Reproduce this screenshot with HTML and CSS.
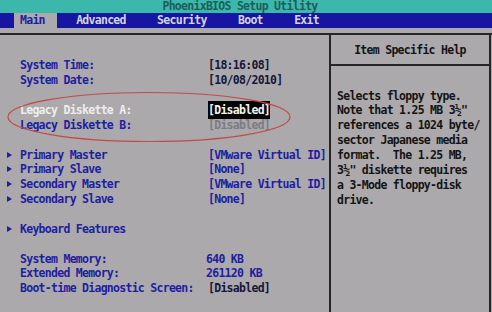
FILE: index.html
```html
<!DOCTYPE html>
<html>
<head>
<meta charset="utf-8">
<link rel="stylesheet" href="styles.css">
</head>
<body>
<div class="screen">
  <header class="title">PhoenixBIOS Setup Utility</header>
  <nav class="menu">
    <span class="tab active">Main</span>
    <span class="tab">Advanced</span>
    <span class="tab">Security</span>
    <span class="tab">Boot</span>
    <span class="tab">Exit</span>
  </nav>
  <div class="frame">
    <section class="main">
      <div class="row"><span></span><span class="label">System Time:</span><span class="value field">[18:16:08]</span></div>
      <div class="row"><span></span><span class="label">System Date:</span><span class="value field">[10/08/2010]</span></div>
      <div class="row"></div>
      <div class="row selected"><span></span><span class="label">Legacy Diskette A:</span><span class="value"><span class="hl">[Disabled]</span></span></div>
      <div class="row"><span></span><span class="label">Legacy Diskette B:</span><span class="value dim">[Disabled]</span></div>
      <div class="row"></div>
      <div class="row"><span class="arrow"></span><span class="label">Primary Master</span><span class="value">[VMware Virtual ID]</span></div>
      <div class="row"><span class="arrow"></span><span class="label">Primary Slave</span><span class="value">[None]</span></div>
      <div class="row"><span class="arrow"></span><span class="label">Secondary Master</span><span class="value">[VMware Virtual ID]</span></div>
      <div class="row"><span class="arrow"></span><span class="label">Secondary Slave</span><span class="value">[None]</span></div>
      <div class="row"></div>
      <div class="row"><span class="arrow"></span><span class="label">Keyboard Features</span></div>
      <div class="row"></div>
      <div class="row"><span></span><span class="label">System Memory:</span><span class="value mem">640 KB</span></div>
      <div class="row"><span></span><span class="label">Extended Memory:</span><span class="value mem">261120 KB</span></div>
      <div class="row"><span></span><span class="label">Boot-time Diagnostic Screen:</span><span class="value field">[Disabled]</span></div>
    </section>
    <aside class="help">
      <div class="help-head">Item Specific Help</div>
      <div class="help-text">
        <div class="line">Selects floppy type.</div>
        <div class="line">Note that 1.25 MB 3½"</div>
        <div class="line">references a 1024 byte/</div>
        <div class="line">sector Japanese media</div>
        <div class="line">format.&nbsp; The 1.25 MB,</div>
        <div class="line">3½" diskette requires</div>
        <div class="line">a 3-Mode floppy-disk</div>
        <div class="line">drive.</div>
      </div>
    </aside>
  </div>
  <svg class="mark" width="286" height="52" viewBox="0 0 286 52">
    <ellipse cx="143" cy="26" rx="141" ry="24.5" fill="none" stroke="#c24a4a" stroke-width="1.2"/>
  </svg>
</div>
</body>
</html>
```
FILE: styles.css
```css
html, body {
  margin: 0;
  padding: 0;
}
body {
  width: 492px;
  height: 312px;
  overflow: hidden;
  background: #aba9ab;
}
.screen {
  position: relative;
  width: 492px;
  height: 312px;
  overflow: hidden;
  font-family: "DejaVu Sans Mono", "Liberation Mono", monospace;
  font-size: 11.5px;
  font-weight: bold;
  letter-spacing: -0.72px;
  color: #1e1ea0;
}
.title {
  height: 13px;
  line-height: 13px;
  background: #3bb8ab;
  color: #1c5f58;
  text-align: center;
  padding-right: 12px;
}
.menu {
  height: 15px;
  line-height: 15px;
  background: #1616a2;
  display: flex;
  gap: 19.3px;
  padding-left: 14px;
}
.tab {
  padding: 0 6px;
  color: #d4d4e4;
}
.tab.active {
  background: #aba9ab;
  color: #1e1ea0;
  padding-right: 12px;
  margin-right: -6px;
}
.frame {
  margin-top: 5px;
  border-top: 2px solid #262626;
  display: flex;
  height: 277px;
}
.main {
  width: 329px;
  padding-top: 23.4px;
}
.row {
  display: grid;
  grid-template-columns: 20px 188px auto;
  height: 14.87px;
  line-height: 14.87px;
  white-space: nowrap;
}
.arrow {
  width: 0;
  height: 0;
  margin: 4px 0 0 7px;
  border-left: 5px solid #1e1ea0;
  border-top: 3.5px solid transparent;
  border-bottom: 3.5px solid transparent;
}
.selected .label {
  color: #eeeeee;
}
.value.field {
  color: #16163a;
}
.value.dim {
  color: #7c7c84;
}
.value.mem {
  margin-left: -2px;
}
.hl {
  background: #050505;
  color: #f2f2f2;
  padding: 2px 0;
}
.help {
  width: 158px;
  border-left: 2px solid #262626;
  border-right: 2px solid #262626;
}
.help-head {
  height: 29px;
  line-height: 30px;
  text-align: center;
  color: #141414;
  border-bottom: 2px solid #262626;
}
.help-text {
  padding: 22.6px 0 0 6px;
  color: #141414;
}
.line {
  height: 14.87px;
  line-height: 14.87px;
  white-space: nowrap;
}
.mark {
  position: absolute;
  left: 6px;
  top: 91px;
}
```
